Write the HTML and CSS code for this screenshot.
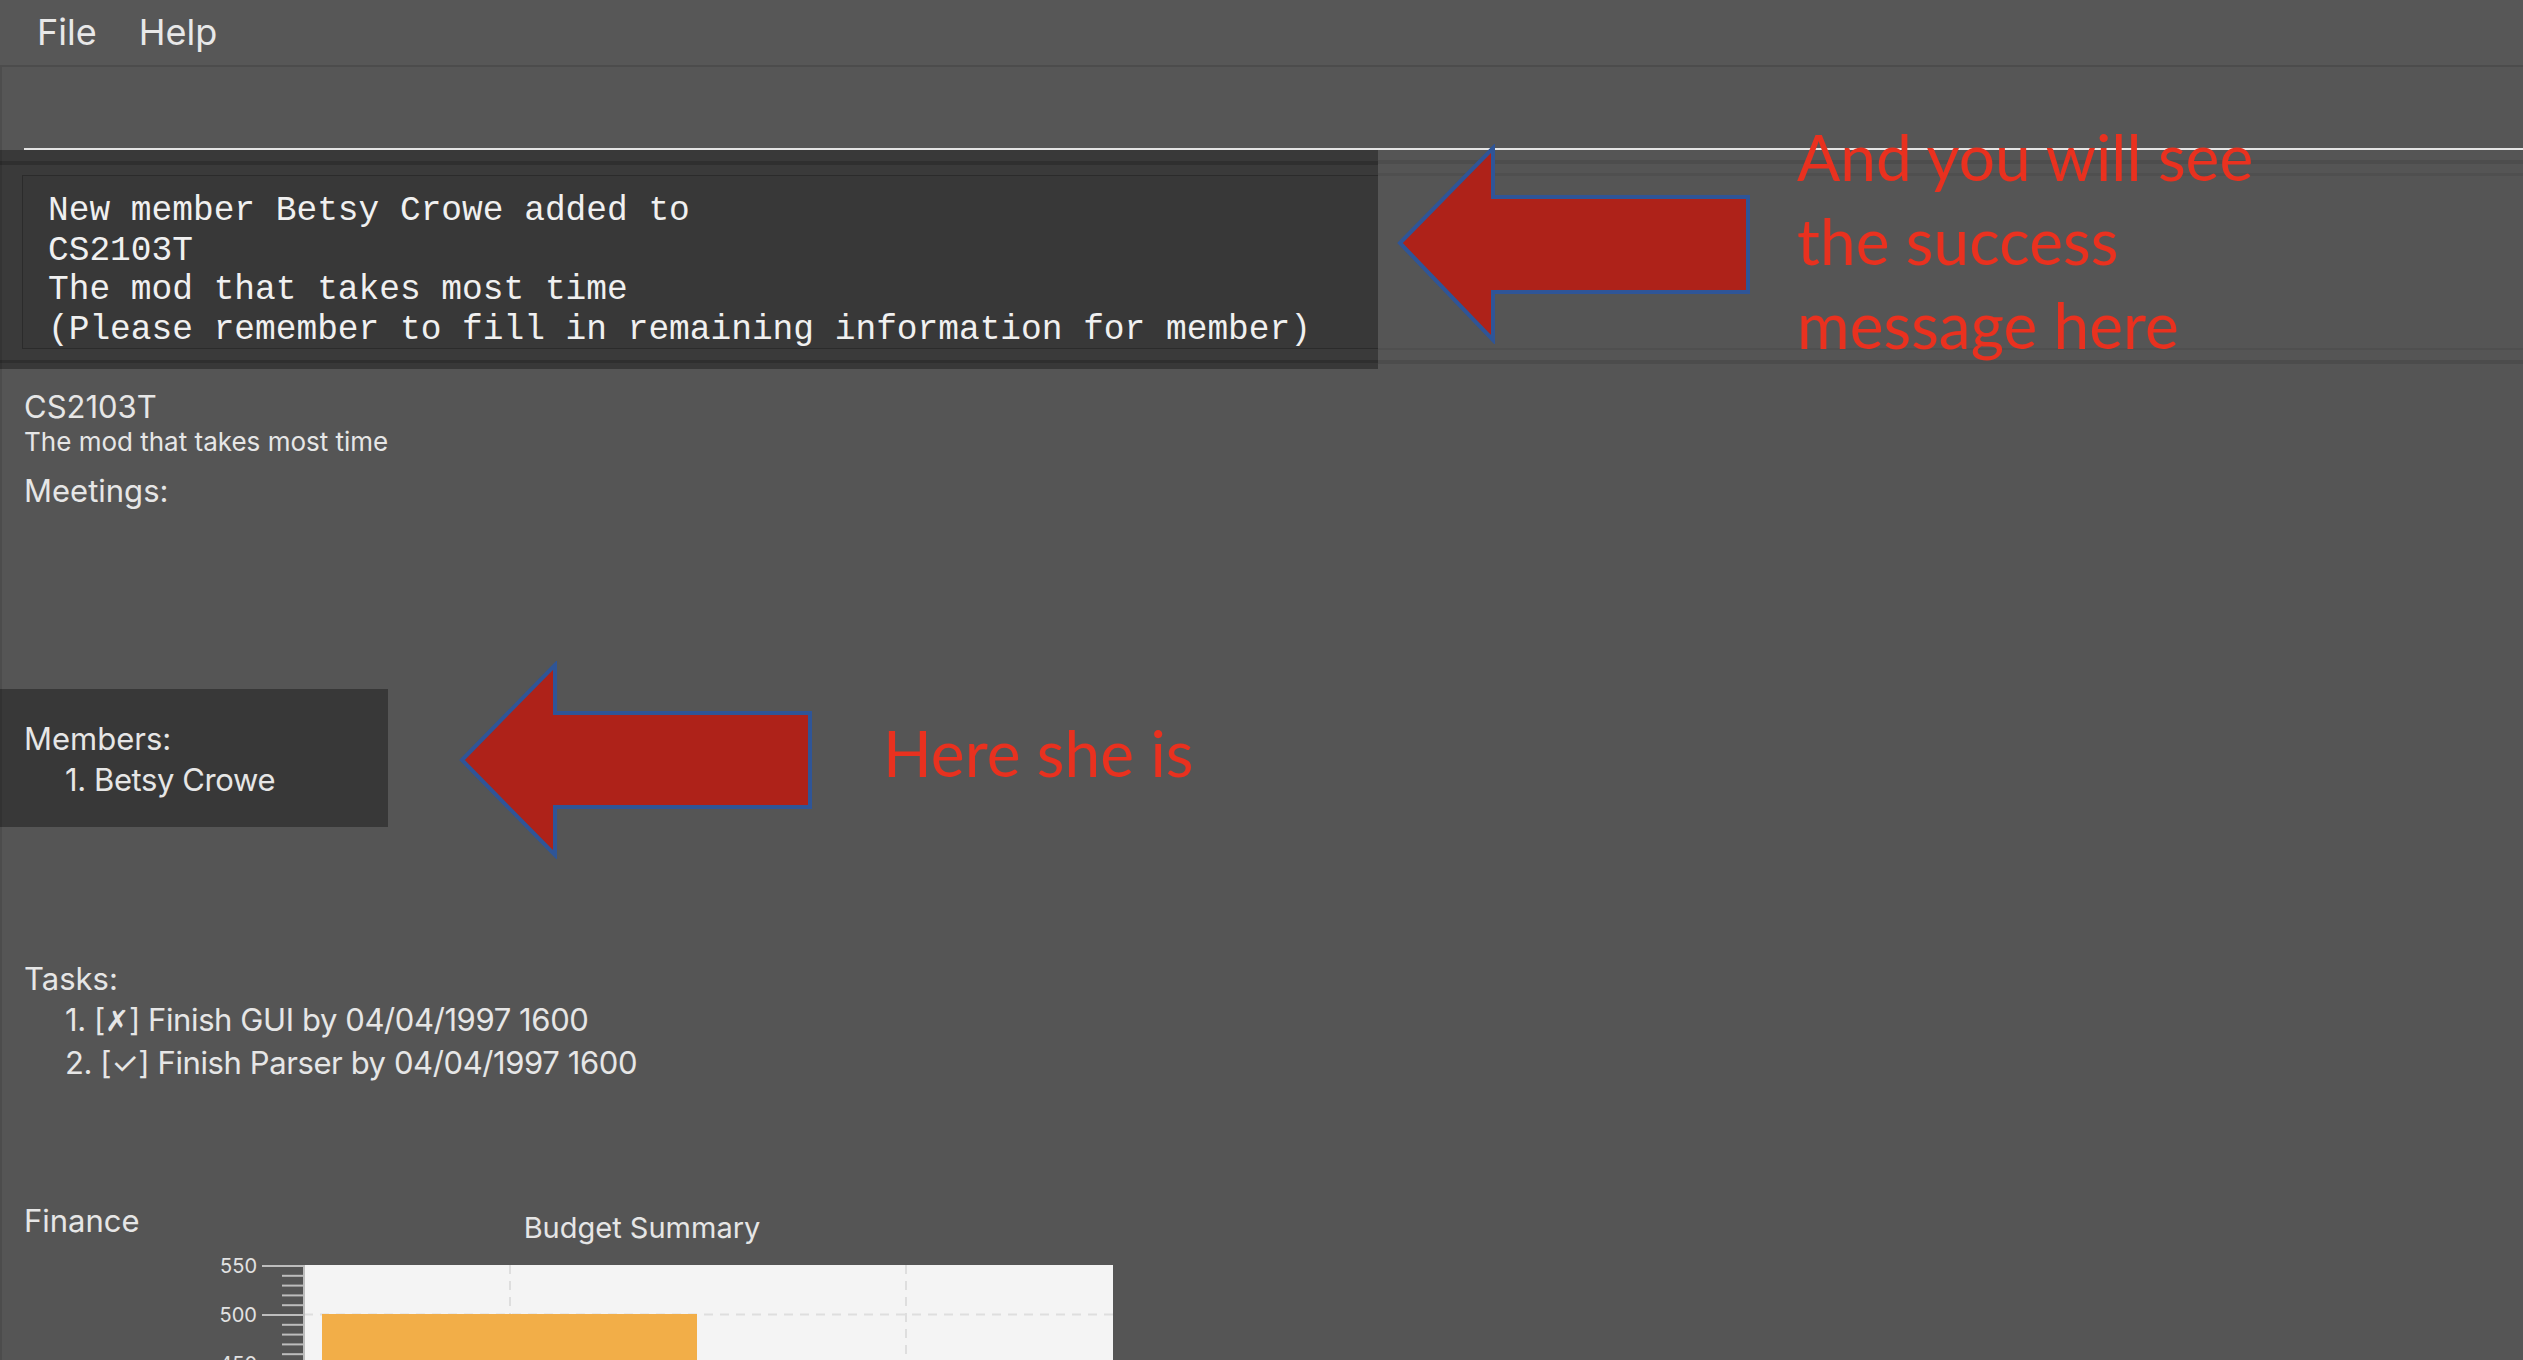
FILE: index.html
```html
<!DOCTYPE html>
<html lang="en">
<head>
<meta charset="utf-8">
<title>Module Manager</title>
<link rel="stylesheet" href="styles.css">
</head>
<body>
<div class="app">
  <div class="menubar">
    <span class="menu-item">File</span>
    <span class="menu-item">Help</span>
  </div>

  <div class="command">
    <div class="command-input"></div>
  </div>

  <div class="result-row">
    <div class="result-pane">
      <div class="result-box">
<pre class="result-text">New member Betsy Crowe added to
CS2103T
The mod that takes most time
(Please remember to fill in remaining information for member)</pre>
      </div>
    </div>
  </div>

  <div class="module">
    <div class="mod-head">
      <div class="mod-code">CS2103T</div>
      <div class="mod-desc">The mod that takes most time</div>
    </div>

    <div class="section meetings">
      <div class="section-title">Meetings:</div>
    </div>

    <div class="section members">
      <div class="section-title">Members:</div>
      <div class="list-item">1. Betsy Crowe</div>
    </div>

    <div class="section tasks">
      <div class="section-title">Tasks:</div>
      <div class="list-item">1. [<span class="cross">✗</span>] Finish GUI by 04/04/1997 1600</div>
      <div class="list-item">2. [✓] Finish Parser by 04/04/1997 1600</div>
    </div>

    <div class="finance">
      <div class="finance-label">Finance</div>
      <div class="chart">
        <div class="chart-title">Budget Summary</div>
        <svg class="chart-svg" width="942" height="110" viewBox="0 0 942 110">
          <rect x="133" y="14" width="809" height="300" fill="#f4f4f4"/>
          <g stroke="#dedede" stroke-width="2" stroke-dasharray="9 7">
            <line x1="339" y1="14" x2="339" y2="320"/>
            <line x1="735" y1="14" x2="735" y2="320"/>
            <line x1="133" y1="63.5" x2="942" y2="63.5"/>
          </g>
          <rect x="151" y="63" width="375" height="300" fill="#f2ae48"/>
          <g stroke="#bdbdbd" stroke-width="2">
            <line x1="133" y1="14" x2="133" y2="120"/>
            <line x1="91" y1="15" x2="133" y2="15"/>
            <line x1="91" y1="64" x2="133" y2="64"/>
            <line x1="91" y1="113" x2="133" y2="113"/>
            <line x1="111" y1="24.8" x2="133" y2="24.8"/>
            <line x1="111" y1="34.6" x2="133" y2="34.6"/>
            <line x1="111" y1="44.4" x2="133" y2="44.4"/>
            <line x1="111" y1="54.2" x2="133" y2="54.2"/>
            <line x1="111" y1="73.8" x2="133" y2="73.8"/>
            <line x1="111" y1="83.6" x2="133" y2="83.6"/>
            <line x1="111" y1="93.4" x2="133" y2="93.4"/>
            <line x1="111" y1="103.2" x2="133" y2="103.2"/>
          </g>
          <g class="axis-label" text-anchor="end">
            <text x="86" y="22">550</text>
            <text x="86" y="71">500</text>
            <text x="86" y="120">450</text>
          </g>
        </svg>
      </div>
    </div>
  </div>

  <svg class="arrow arrow-1" width="356" height="200" viewBox="0 0 356 200">
    <polygon points="4,99 97,4 97,53 352,53 352,148 97,148 97,196" fill="#ae2219" stroke="#2f5597" stroke-width="4"/>
  </svg>
  <div class="note note-1">And you will see<br>the success<br>message here</div>

  <svg class="arrow arrow-2" width="356" height="198" viewBox="0 0 356 198">
    <polygon points="4,99 97,4 97,52 352,52 352,146 97,146 97,194" fill="#ae2219" stroke="#2f5597" stroke-width="4"/>
  </svg>
  <div class="note note-2">Here she is</div>

  <div class="edge-strip"></div>
</div>
</body>
</html>
```
FILE: styles.css
```css
html, body {
  margin: 0;
  padding: 0;
  height: 100%;
  overflow: hidden;
  background: #555555;
}

.app {
  position: relative;
  width: 2523px;
  height: 1360px;
  overflow: hidden;
  background: #555555;
  font-family: Inter, "Liberation Sans", sans-serif;
  color: #e6e6e6;
}

/* menu bar */
.menubar {
  display: flex;
  gap: 42px;
  height: 65px;
  padding-left: 37px;
  border-bottom: 2px solid #4c4c4c;
  background: #575757;
}
.menu-item {
  font-size: 36px;
  line-height: 65px;
  color: #e8e8e8;
}

/* command box */
.command {
  padding-left: 24px;
  background: #565656;
}
.command-input {
  height: 81px;
  border-bottom: 2px solid #e4e4e4;
}

/* result display */
.result-row {
  height: 219px;
  background:
    linear-gradient(to bottom,
      transparent 0 10px, #4d4d4d 10px 14px, transparent 14px 23px,
      #4f4f4f 23px 26px, transparent 26px 198px, #4f4f4f 198px 200px,
      transparent 200px 210px, #4c4c4c 210px 214px, transparent 214px),
    #555555;
}
.result-pane {
  width: 1378px;
  height: 219px;
  overflow: hidden;
  background:
    linear-gradient(to bottom,
      #393939 0 11px, #2f2f2f 11px 15px, #3a3a3a 15px 210px,
      #2f2f2f 210px 213px, #383838 213px),
    #383838;
  padding-top: 25px;
  box-sizing: border-box;
}
.result-box {
  margin-left: 22px;
  height: 174px;
  box-sizing: border-box;
  border: 1px solid #2b2b2b;
  border-right: none;
  background: #383838;
  width: 1400px;
}
.result-text {
  margin: 0;
  padding: 15px 0 0 25px;
  font-family: "Liberation Mono", "DejaVu Sans Mono", monospace;
  font-size: 34.5px;
  line-height: 39.7px;
  color: #f0f0f0;
}

/* module details */
.module {
  padding-top: 19px;
}
.mod-head {
  padding-left: 24px;
}
.mod-code {
  font-size: 31px;
  line-height: 37px;
}
.mod-desc {
  font-size: 26px;
  line-height: 34px;
}
.section {
  padding-left: 24px;
}
.section-title,
.list-item {
  font-size: 31px;
  line-height: 41px;
}
.list-item {
  padding-left: 41px;
  letter-spacing: -0.4px;
}
.meetings {
  margin-top: 11px;
  height: 219px;
}
.members {
  width: 388px;
  box-sizing: border-box;
  background: #383838;
  padding-top: 29px;
  padding-bottom: 27px;
}
.tasks {
  margin-top: 131px;
}
.cross {
  font-family: "DejaVu Sans", sans-serif;
  font-weight: 700;
  font-size: 29px;
}

/* finance */
.finance {
  display: flex;
  align-items: flex-start;
  margin-top: 120px;
  padding-left: 24px;
}
.finance-label {
  width: 147px;
  font-size: 31px;
  line-height: 36px;
}
.chart {
  width: 942px;
  margin-top: 7px;
}
.chart-title {
  text-align: center;
  font-size: 29px;
  line-height: 36px;
  color: #e6e6e6;
}
.chart-svg {
  display: block;
  margin-top: 5px;
}
.axis-label {
  font-family: Inter, "Liberation Sans", sans-serif;
  font-size: 20px;
  fill: #e2e2e2;
}

/* annotations laid over the screenshot */
.arrow {
  position: absolute;
  display: block;
}
.arrow-1 {
  left: 1396px;
  top: 144px;
}
.arrow-2 {
  left: 458px;
  top: 661px;
}
.note {
  position: absolute;
  font-family: Lato, "Open Sans", sans-serif;
  font-size: 64px;
  line-height: 84px;
  color: #e9311f;
  white-space: nowrap;
}
.note-1 {
  left: 1797px;
  top: 115px;
}
.note-2 {
  left: 883px;
  top: 711px;
}

/* thin darker strip along the window's left edge */
.edge-strip {
  position: absolute;
  left: 0;
  top: 67px;
  bottom: 0;
  width: 2px;
  background: rgba(0, 0, 0, 0.1);
}
```
